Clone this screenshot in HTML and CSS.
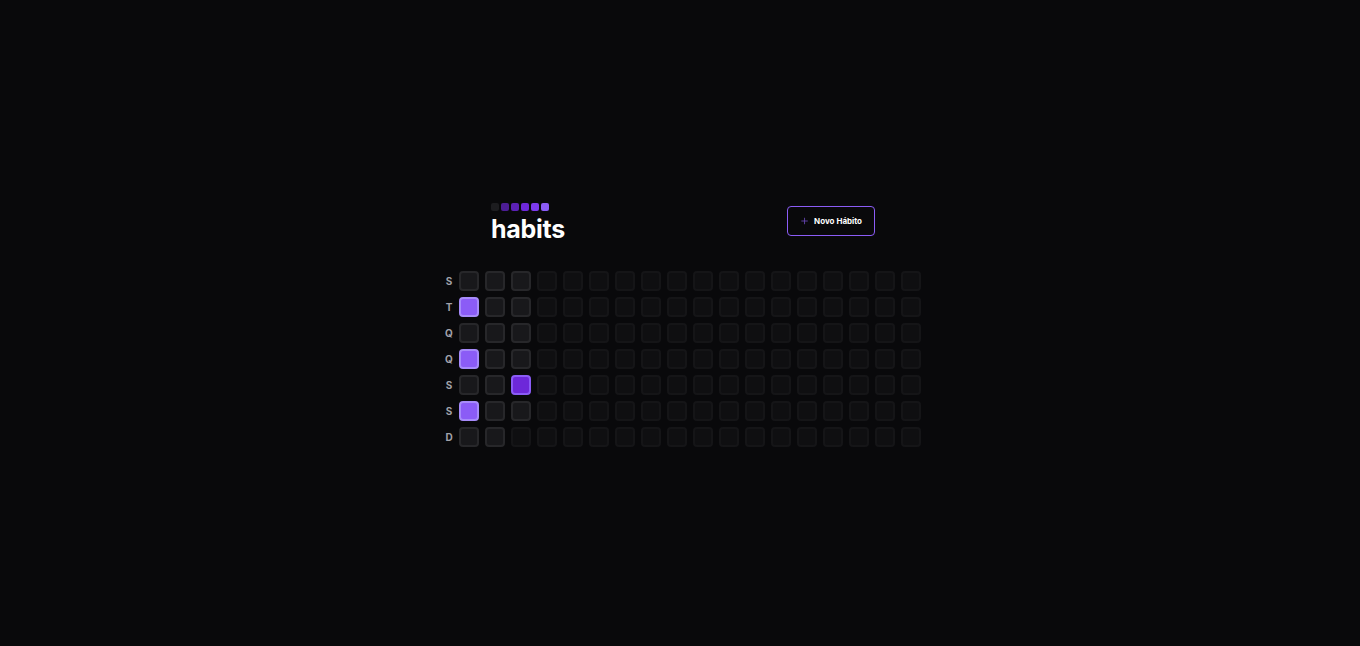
FILE: index.html
```html
<!DOCTYPE html>
<html lang="pt-BR">

<head>
  <meta charset="UTF-8">
  <title>habits</title>
  <link rel="stylesheet" href="styles.css">
</head>

<body>
  <div class="app">
    <header class="header">
      <div class="brand">
        <div class="logo">
          <span class="logo-dot dot-0"></span>
          <span class="logo-dot dot-1"></span>
          <span class="logo-dot dot-2"></span>
          <span class="logo-dot dot-3"></span>
          <span class="logo-dot dot-4"></span>
          <span class="logo-dot dot-5"></span>
        </div>
        <h1 class="title">habits</h1>
      </div>

      <button type="button" class="new-habit-button">
        <svg class="plus-icon" width="10" height="10" viewBox="0 0 10 10" fill="none">
          <path d="M5 1v8M1 5h8" stroke="#6a48b8" stroke-width="1.2" stroke-linecap="round" />
        </svg>
        Novo Hábito
      </button>
    </header>

    <div class="summary">
      <div class="week-days" id="week-days"></div>
      <div class="days-grid" id="days-grid"></div>
    </div>
  </div>

  <script src="script.js"></script>
</body>

</html>
```

FILE: styles.css
```css
* {
  box-sizing: border-box;
}

body {
  margin: 0;
  min-height: 100vh;
  background-color: #09090b;
  color: #fff;
  font-family: Inter, "Noto Sans", sans-serif;
  display: flex;
  align-items: center;
  justify-content: center;
  padding-left: 6px;
  padding-top: 3px;
}

.app {
  display: flex;
  flex-direction: column;
  align-items: center;
  gap: 29px;
}

.header {
  width: 384px;
  display: flex;
  align-items: center;
  justify-content: space-between;
}

.brand {
  display: flex;
  flex-direction: column;
  gap: 6px;
}

.logo {
  display: flex;
  gap: 2px;
}

.logo-dot {
  width: 8px;
  height: 8px;
  border-radius: 2px;
}

.dot-0 { background-color: #1c1c1f; }
.dot-1 { background-color: #4c1d95; }
.dot-2 { background-color: #5b21b6; }
.dot-3 { background-color: #6d28d9; }
.dot-4 { background-color: #7c3aed; }
.dot-5 { background-color: #8b5cf6; }

.title {
  margin: 0;
  font-size: 25px;
  line-height: 1;
  font-weight: 700;
  letter-spacing: -0.01em;
}

.new-habit-button {
  width: 88px;
  height: 30px;
  margin-bottom: 2px;
  display: flex;
  align-items: center;
  gap: 6px;
  padding: 0 12px 0 13px;
  background: transparent;
  border: 1px solid #8b5cf6;
  border-radius: 4px;
  color: #fff;
  font-family: inherit;
  font-size: 8px;
  font-weight: 700;
  white-space: nowrap;
  cursor: pointer;
}

.summary {
  display: flex;
  gap: 6px;
}

.week-days {
  display: grid;
  grid-template-rows: repeat(7, 20px);
  gap: 6px;
}

.week-day {
  width: 8px;
  display: flex;
  align-items: center;
  justify-content: center;
  color: #a1a1aa;
  font-size: 10px;
  font-weight: 700;
}

.days-grid {
  display: grid;
  grid-template-rows: repeat(7, 20px);
  grid-auto-flow: column;
  grid-auto-columns: 20px;
  gap: 6px;
}

.day {
  width: 20px;
  height: 20px;
  border-radius: 4px;
  border: 2px solid #27272a;
  background-color: #18181b;
}

.day.future {
  opacity: 0.4;
}

.day.done {
  background-color: #8b5cf6;
  border-color: #a78bfa;
}

.day.partial {
  background-color: #6d28d9;
  border-color: #8b5cf6;
}
```

FILE: script.js
```js
const weekDays = ["S", "T", "Q", "Q", "S", "S", "D"];

// past days in order, week by week (column by column)
const pastDays = [
  "", "done", "", "done", "", "done", "",
  "", "", "", "", "", "", "",
  "", "", "", "", "partial", "",
];

const totalDays = 18 * 7;

const weekDaysElement = document.querySelector("#week-days");
const daysGridElement = document.querySelector("#days-grid");

weekDays.forEach((weekDay) => {
  const dayLabel = document.createElement("div");
  dayLabel.className = "week-day";
  dayLabel.textContent = weekDay;
  weekDaysElement.appendChild(dayLabel);
});

for (let i = 0; i < totalDays; i++) {
  const dayElement = document.createElement("div");
  dayElement.className = "day";

  if (i < pastDays.length) {
    if (pastDays[i]) {
      dayElement.classList.add(pastDays[i]);
    }
  } else {
    dayElement.classList.add("future");
  }

  daysGridElement.appendChild(dayElement);
}
```
